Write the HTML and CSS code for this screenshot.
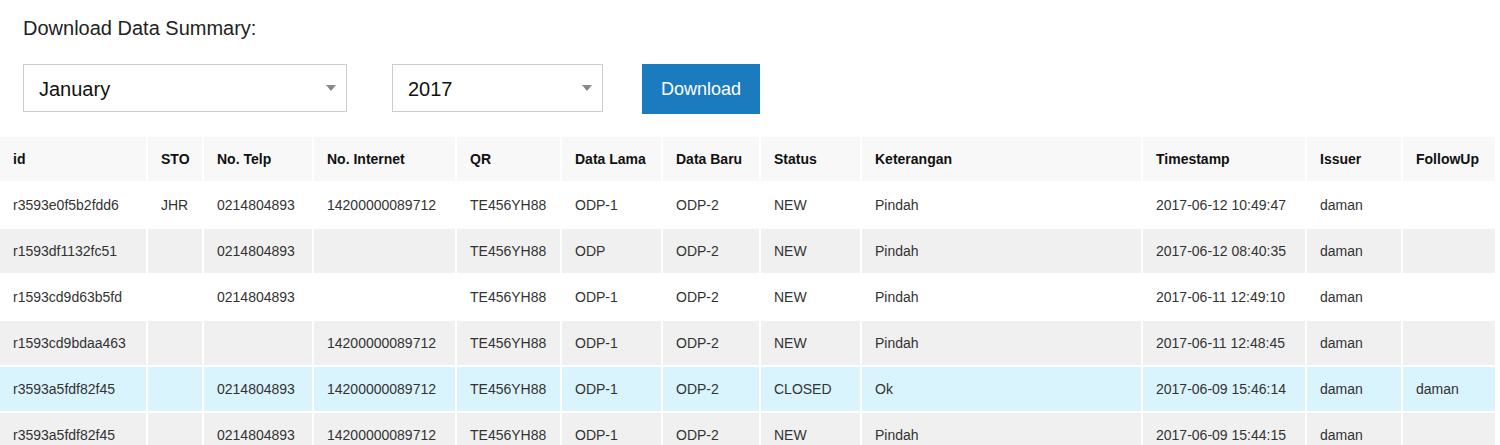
FILE: index.html
```html
<!DOCTYPE html>
<html lang="id">
<head>
<meta charset="utf-8">
<title>Download Data Summary</title>
<link rel="stylesheet" href="styles.css">
</head>
<body>
<div class="panel">
  <h2 class="title">Download Data Summary:</h2>
  <div class="controls">
    <div class="select-wrap month">
      <select class="sel">
        <option>January</option>
        <option>February</option>
      </select>
    </div>
    <div class="select-wrap year">
      <select class="sel">
        <option>2017</option>
        <option>2016</option>
      </select>
    </div>
    <button class="btn" type="button">Download</button>
  </div>
</div>
<table class="data">
  <thead>
    <tr>
      <th class="c-id">id</th>
      <th class="c-sto">STO</th>
      <th class="c-telp">No. Telp</th>
      <th class="c-inet">No. Internet</th>
      <th class="c-qr">QR</th>
      <th class="c-lama">Data Lama</th>
      <th class="c-baru">Data Baru</th>
      <th class="c-status">Status</th>
      <th class="c-ket">Keterangan</th>
      <th class="c-ts">Timestamp</th>
      <th class="c-iss">Issuer</th>
      <th class="c-fu">FollowUp</th>
    </tr>
  </thead>
  <tbody>
    <tr>
      <td>r3593e0f5b2fdd6</td><td>JHR</td><td>0214804893</td><td>14200000089712</td><td>TE456YH88</td><td>ODP-1</td><td>ODP-2</td><td>NEW</td><td>Pindah</td><td>2017-06-12 10:49:47</td><td>daman</td><td></td>
    </tr>
    <tr class="alt">
      <td>r1593df1132fc51</td><td></td><td>0214804893</td><td></td><td>TE456YH88</td><td>ODP</td><td>ODP-2</td><td>NEW</td><td>Pindah</td><td>2017-06-12 08:40:35</td><td>daman</td><td></td>
    </tr>
    <tr>
      <td>r1593cd9d63b5fd</td><td></td><td>0214804893</td><td></td><td>TE456YH88</td><td>ODP-1</td><td>ODP-2</td><td>NEW</td><td>Pindah</td><td>2017-06-11 12:49:10</td><td>daman</td><td></td>
    </tr>
    <tr class="alt">
      <td>r1593cd9bdaa463</td><td></td><td></td><td>14200000089712</td><td>TE456YH88</td><td>ODP-1</td><td>ODP-2</td><td>NEW</td><td>Pindah</td><td>2017-06-11 12:48:45</td><td>daman</td><td></td>
    </tr>
    <tr class="info">
      <td>r3593a5fdf82f45</td><td></td><td>0214804893</td><td>14200000089712</td><td>TE456YH88</td><td>ODP-1</td><td>ODP-2</td><td>CLOSED</td><td>Ok</td><td>2017-06-09 15:46:14</td><td>daman</td><td>daman</td>
    </tr>
    <tr class="alt">
      <td>r3593a5fdf82f45</td><td></td><td>0214804893</td><td>14200000089712</td><td>TE456YH88</td><td>ODP-1</td><td>ODP-2</td><td>NEW</td><td>Pindah</td><td>2017-06-09 15:44:15</td><td>daman</td><td></td>
    </tr>
  </tbody>
</table>
</body>
</html>
```

FILE: styles.css
```css
html, body {
  margin: 0;
  padding: 0;
  overflow: hidden;
  background: #fff;
}

body {
  font-family: "Liberation Sans", Arial, sans-serif;
  color: #333;
}

.panel {
  padding: 16px 0 0 23px;
}

.title {
  margin: 0;
  font-size: 20px;
  line-height: 24px;
  font-weight: normal;
  color: #222;
}

.controls {
  display: flex;
  align-items: flex-start;
  margin-top: 24px;
}

.select-wrap {
  position: relative;
  height: 48px;
}

.select-wrap.month {
  width: 324px;
  margin-right: 45px;
}

.select-wrap.year {
  width: 211px;
  margin-right: 39px;
}

.select-wrap::after {
  content: "";
  position: absolute;
  right: 11px;
  top: 21px;
  width: 0;
  height: 0;
  border-left: 5px solid transparent;
  border-right: 5px solid transparent;
  border-top: 6px solid #888;
  pointer-events: none;
}

.sel {
  -webkit-appearance: none;
  appearance: none;
  box-sizing: border-box;
  width: 100%;
  height: 48px;
  margin: 0;
  padding: 1px 30px 0 15px;
  border: 1px solid #ccc;
  border-radius: 0;
  background: #fff;
  font-family: "Liberation Sans", Arial, sans-serif;
  font-size: 20px;
  color: #111;
  outline: none;
}

.btn {
  box-sizing: border-box;
  width: 118px;
  height: 50px;
  margin: 0;
  padding: 0;
  border: none;
  border-radius: 0;
  background: #1b7bbf;
  color: #fff;
  font-family: "Liberation Sans", Arial, sans-serif;
  font-size: 18px;
  cursor: pointer;
}

.data {
  table-layout: fixed;
  width: 1499px;
  margin: 21px 0 0 -2px;
  border-collapse: separate;
  border-spacing: 2px;
  font-size: 14px;
  line-height: 20px;
}

.data th,
.data td {
  box-sizing: border-box;
  height: 44px;
  padding: 12px 8px 12px 13px;
  text-align: left;
  vertical-align: middle;
  white-space: nowrap;
  overflow: hidden;
}

.data th {
  background: #f8f8f8;
  color: #111;
  font-weight: bold;
}

.data td {
  background: #fff;
  color: #333;
}

.data tr.alt td {
  background: #f0f0f0;
}

.data tr.info td {
  background: #d9f4fc;
}

.c-id { width: 146px; }
.c-sto { width: 54px; }
.c-telp { width: 108px; }
.c-inet { width: 141px; }
.c-qr { width: 103px; }
.c-lama { width: 99px; }
.c-baru { width: 96px; }
.c-status { width: 99px; }
.c-ket { width: 279px; }
.c-ts { width: 162px; }
.c-iss { width: 94px; }
.c-fu { width: 92px; }
```
